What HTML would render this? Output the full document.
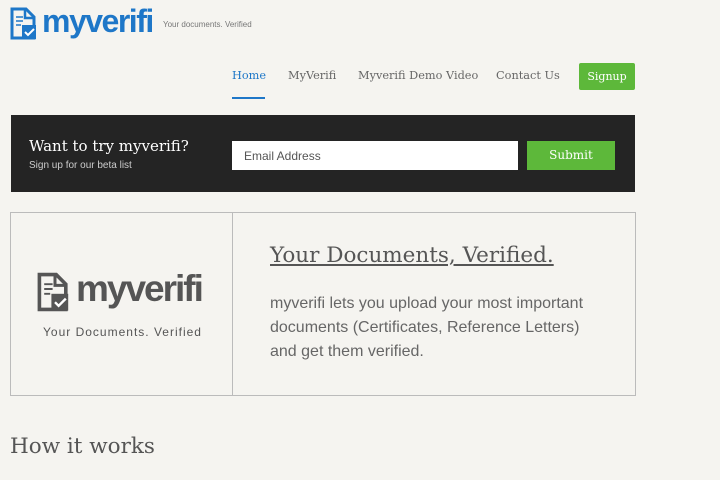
<!DOCTYPE html><html><head><style>
body{margin:0;width:720px;height:480px;background:#f5f4f0;position:relative;overflow:hidden;font-family:"Liberation Sans",sans-serif}
.a{position:absolute}
.slab{font-family:"DejaVu Serif",serif}
.nav{font-size:11.3px;color:#666;top:69px}
</style></head><body>
<svg class="a" style="left:10px;top:7px" width="30" height="33" viewBox="0 0 30 33"><path d="M2 2h14l8 8v21H2z" fill="none" stroke="#1e77c8" stroke-width="3"/><path d="M15 2v9h9" fill="none" stroke="#1e77c8" stroke-width="2.5"/><path d="M6 10h7M6 14h7M6 18h5" stroke="#1e77c8" stroke-width="1.6"/><rect x="12" y="18" width="14" height="14" fill="#1e77c8"/><path d="M15 25l3 3 6-6" stroke="#fff" stroke-width="2" fill="none"/></svg>
<div class="a" style="left:42px;top:3px;font-size:32px;font-weight:bold;color:#1e77c8;letter-spacing:-1.5px">myverifi</div>
<div class="a" style="left:163px;top:20px;font-size:8px;color:#777">Your documents. Verified</div>
<div class="a slab nav" style="left:232px;color:#1e77c8">Home</div>
<div class="a" style="left:232px;top:97px;width:33px;height:2px;background:#1e77c8"></div>
<div class="a slab nav" style="left:288px">MyVerifi</div>
<div class="a slab nav" style="left:358px">Myverifi Demo Video</div>
<div class="a slab nav" style="left:496px">Contact Us</div>
<div class="a slab" style="left:579px;top:63px;width:56px;height:27px;background:#5db83a;border-radius:2px;color:#fff;font-size:11px;line-height:27px;text-align:center">Signup</div>
<div class="a" style="left:11px;top:115px;width:624px;height:77px;background:#242424"></div>
<div class="a slab" style="left:29px;top:137px;font-size:15px;color:#fff">Want to try myverifi?</div>
<div class="a" style="left:29px;top:160px;font-size:10px;color:#ccc">Sign up for our beta list</div>
<div class="a" style="left:232px;top:141px;width:286px;height:29px;background:#fff"></div>
<div class="a" style="left:244px;top:149px;font-size:12px;color:#555">Email Address</div>
<div class="a slab" style="left:527px;top:141px;width:88px;height:29px;background:#5db83a;color:#fff;font-size:12px;line-height:29px;text-align:center">Submit</div>
<div class="a" style="left:10px;top:212px;width:624px;height:182px;border:1px solid #bbb"></div>
<div class="a" style="left:232px;top:212px;width:1px;height:184px;background:#bbb"></div>
<svg class="a" style="left:37px;top:272px" width="36" height="40" viewBox="0 0 30 33"><path d="M2 2h14l8 8v21H2z" fill="none" stroke="#555" stroke-width="3"/><path d="M15 2v9h9" fill="none" stroke="#555" stroke-width="2.5"/><path d="M6 10h7M6 14h7M6 18h5" stroke="#555" stroke-width="1.6"/><rect x="12" y="18" width="14" height="14" fill="#555"/><path d="M15 25l3 3 6-6" stroke="#fff" stroke-width="2" fill="none"/></svg>
<div class="a" style="left:76px;top:268px;font-size:37px;font-weight:bold;color:#555;letter-spacing:-2px">myverifi</div>
<div class="a" style="left:43px;top:325px;font-size:12px;color:#555;letter-spacing:1px">Your Documents. Verified</div>
<div class="a slab" style="left:270px;top:243px;font-size:21.5px;color:#555;text-decoration:underline">Your Documents, Verified.</div>
<div class="a" style="left:270px;top:292px;font-size:16px;line-height:24px;color:#666;width:340px">myverifi lets you upload your most important documents (Certificates, Reference Letters) and get them verified.</div>
<div class="a slab" style="left:10px;top:434px;font-size:21.5px;color:#555">How it works</div>
</body></html>
